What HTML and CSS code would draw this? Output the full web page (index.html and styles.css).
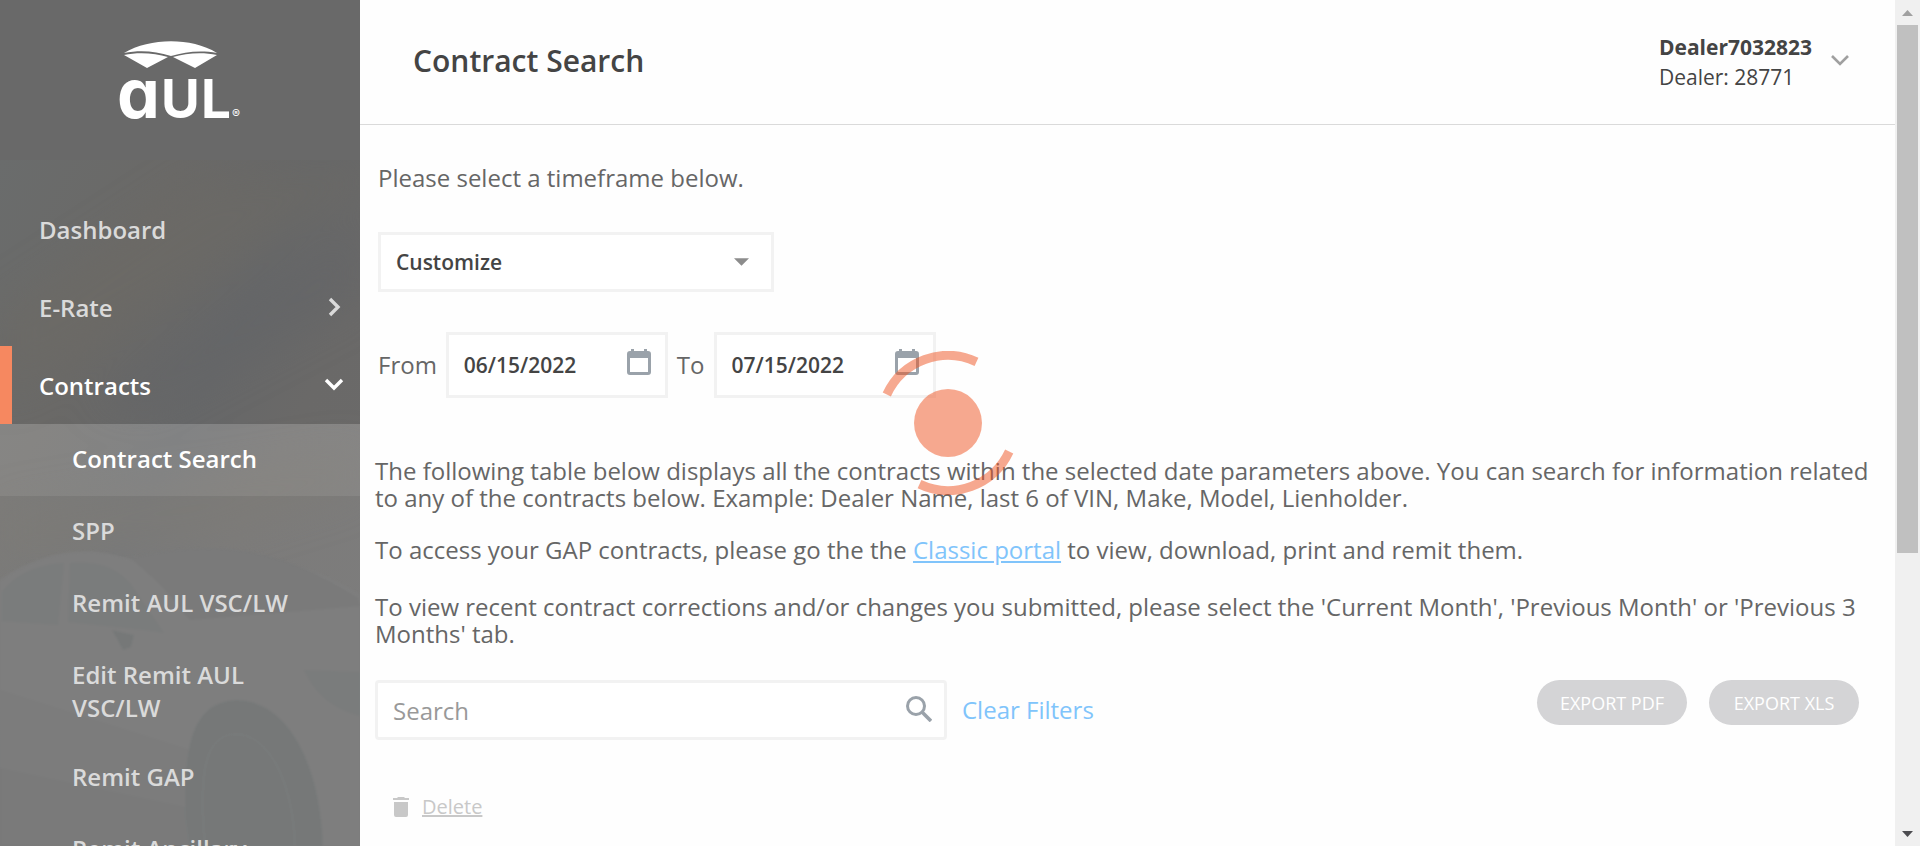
FILE: index.html
```html
<!DOCTYPE html>
<html lang="en">
<head>
<meta charset="utf-8">
<title>Contract Search</title>
<link rel="stylesheet" href="styles.css">
</head>
<body>
<div class="app">
  <aside class="sidebar">
    <svg class="sidebar-photo" viewBox="0 0 360 686" preserveAspectRatio="none" aria-hidden="true">
      <defs>
        <linearGradient id="sky" x1="0" y1="0" x2="1" y2="1">
          <stop offset="0" stop-color="#6a6c6c"/>
          <stop offset="0.25" stop-color="#6a6967"/>
          <stop offset="0.45" stop-color="#666768"/>
          <stop offset="0.6" stop-color="#6a6968"/>
          <stop offset="1" stop-color="#6b6b6b"/>
        </linearGradient>
        <filter id="soft" x="-20%" y="-20%" width="140%" height="140%"><feGaussianBlur stdDeviation="20"/></filter>
        <filter id="edge" x="-5%" y="-5%" width="110%" height="110%"><feGaussianBlur stdDeviation="1"/></filter>
      </defs>
      <rect width="360" height="686" fill="url(#sky)"/>
      <g filter="url(#soft)" opacity="0.5">
        <path d="M0 150 200 20 360 0v30L120 170 0 240z" fill="#6d6a65"/>
        <path d="M360 60v80L150 250l-60-10z" fill="#636567"/>
        <path d="M0 350 360 290v40L200 380 0 400z" fill="#6c6964"/>
      </g>
      <g filter="url(#edge)">
        <path d="M0 420c30-20 60-30 95-28 30 2 60 20 80 8 60-10 120-5 185 35v251H0z" fill="#6d6d6d"/>
        <path d="M2 432c15-20 40-28 62-29l-6 62-56-4zM70 403c30-2 45 4 60 20l34 50-20-3-76-8z" fill="#686a6a"/>
        <path d="M130 398c90-20 150-10 228 40l2 8-170 14c-10-10-20-30-60-62z" fill="#676868"/>
        <path d="M112 470l22 5-3 12-8 3z" fill="#646666"/>
        <path d="M0 530 190 590v96H0z" fill="#6a6b6b"/>
        <path d="M0 608 190 648v38H0z" fill="#676868"/>
        <path d="M186 658c-4-80 10-116 50-118 50 0 84 60 87 146H190z" fill="#646666"/>
        <path d="M205 686c-8-90 6-110 30-112 35 0 58 50 60 112" fill="none" stroke="#6b6c6c"/>
        <path d="M304 510l56 2v44c-30-8-46-24-56-46z" fill="#686a6a"/>
      </g>
    </svg>

    <div class="brand">
      <svg class="logo" viewBox="0 0 120 80" role="img" aria-label="aUL">
        <path d="M4 12C30-3 70-4 97 12 80 9 65 11 51 15 35 10 20 9 4 12z" fill="#fff"/>
        <path d="M4 14c14-3 31-2 44 2L27 27zM97 14c-14-3-31-2-44 2l22 11z" fill="#fff"/>
        <text class="logo-text" x="-3" y="77"><tspan class="logo-small">a</tspan><tspan class="logo-cap" x="41">U</tspan><tspan class="logo-cap" x="81">L</tspan><tspan class="logo-mark" x="112">®</tspan></text>
      </svg>
    </div>

    <nav class="nav">
      <a class="nav-item" href="#">Dashboard</a>
      <a class="nav-item" href="#">E-Rate
        <svg class="nav-arrow" viewBox="0 0 20 20" aria-hidden="true"><path d="M6 2l8 8-8 8" fill="none" stroke="currentColor" stroke-width="3.4"/></svg>
      </a>
      <a class="nav-item nav-item-open" href="#">Contracts
        <svg class="nav-arrow" viewBox="0 0 20 20" aria-hidden="true"><path d="M2 5l8 8 8-8" fill="none" stroke="currentColor" stroke-width="3.4"/></svg>
      </a>
      <div class="subnav">
        <a class="subnav-item subnav-item-active" href="#">Contract Search</a>
        <a class="subnav-item" href="#">SPP</a>
        <a class="subnav-item" href="#">Remit AUL VSC/LW</a>
        <a class="subnav-item" href="#">Edit Remit AUL VSC/LW</a>
        <a class="subnav-item" href="#">Remit GAP</a>
        <a class="subnav-item" href="#">Remit Ancillary</a>
      </div>
    </nav>
  </aside>

  <main class="main">
    <header class="header">
      <h1 class="title">Contract Search</h1>
      <button class="account" type="button">
        <span class="account-text"><strong class="account-name">Dealer7032823</strong><span>Dealer: 28771</span></span>
        <svg class="account-arrow" viewBox="0 0 20 20" aria-hidden="true"><path d="M2 4l8 8 8-8" fill="none" stroke="#a0a0a0" stroke-width="2.6"/></svg>
      </button>
    </header>

    <div class="content">
      <section class="timeframe">
        <label class="lead" for="range">Please select a timeframe below.</label>
        <div class="select-wrap">
          <select class="select" id="range"><option>Customize</option></select>
          <svg class="select-arrow" viewBox="0 0 14 7" aria-hidden="true"><path d="M0 0h14L7 7z" fill="#8c8c8c"/></svg>
        </div>
        <div class="dates">
          <label class="date-label" for="from">From</label>
          <div class="date">
            <input class="date-input" id="from" type="text" value="06/15/2022">
            <button class="date-button" type="button" aria-label="Choose start date">
              <svg viewBox="0 0 24 26" width="24" height="26" aria-hidden="true"><path d="M3 2h1V0h3v2h10V0h3v2h1a3 3 0 0 1 3 3v18a3 3 0 0 1-3 3H3a3 3 0 0 1-3-3V5a3 3 0 0 1 3-3zm0 7v14h18V9z" fill="#9aa2aa" fill-rule="evenodd"/></svg>
            </button>
          </div>
          <label class="date-label" for="to">To</label>
          <div class="date">
            <input class="date-input" id="to" type="text" value="07/15/2022">
            <button class="date-button" type="button" aria-label="Choose end date">
              <svg viewBox="0 0 24 26" width="24" height="26" aria-hidden="true"><path d="M3 2h1V0h3v2h10V0h3v2h1a3 3 0 0 1 3 3v18a3 3 0 0 1-3 3H3a3 3 0 0 1-3-3V5a3 3 0 0 1 3-3zm0 7v14h18V9z" fill="#9aa2aa" fill-rule="evenodd"/></svg>
            </button>
          </div>
        </div>
      </section>

      <section class="notes">
        <p class="note">The following table below displays all the contracts within the selected date parameters above. You can search for information related to any of the contracts below. Example: Dealer Name, last 6 of VIN, Make, Model, Lienholder.</p>
        <p class="note note-portal">To access your GAP contracts, please go the the <a class="link" href="#">Classic portal</a> to view, download, print and remit them.</p>
        <p class="note">To view recent contract corrections and/or changes you submitted, please select the 'Current Month', 'Previous Month' or 'Previous 3 Months' tab.</p>
      </section>

      <section class="toolbar">
        <div class="search">
          <input class="search-input" type="text" placeholder="Search" aria-label="Search">
          <button class="search-button" type="button" aria-label="Run search">
            <svg viewBox="0 0 26 26" width="26" height="26" aria-hidden="true"><circle cx="10" cy="10" r="8.5" fill="none" stroke="#9aa2aa" stroke-width="3"/><path d="M16 16l9 9" stroke="#9aa2aa" stroke-width="3.6"/></svg>
          </button>
        </div>
        <button class="clear" type="button">Clear Filters</button>
        <div class="exports">
          <button class="export" type="button">EXPORT PDF</button>
          <button class="export" type="button">EXPORT XLS</button>
        </div>
      </section>

      <button class="delete" type="button">
        <svg viewBox="0 0 16 20" width="16" height="20" aria-hidden="true"><path d="M0 1h4l1-1h6l1 1h4v2H0zM1 5h14v13a2 2 0 0 1-2 2H3a2 2 0 0 1-2-2z" fill="#c8c8c8"/></svg>
        <span class="delete-text">Delete</span>
      </button>
    </div>
  </main>

  <div class="scrollbar" aria-hidden="true">
    <svg class="scroll-end" viewBox="0 0 25 25"><path d="M7 16l5.500-6L18 16z" fill="#a0a0a0"/></svg>
    <div class="scroll-track"><div class="scroll-thumb"></div></div>
    <svg class="scroll-end" viewBox="0 0 25 25"><path d="M7 10h11l-5.500 6z" fill="#4c4c50"/></svg>
  </div>

  <div class="loader" role="status" aria-label="Loading">
    <svg viewBox="-72 -72 144 144" width="144" height="144" aria-hidden="true">
      <g opacity="0.5"><circle r="34" fill="#ef5523"/>
      <path d="M-61.200-28.500A67.500 67.500 0 0 1 28.500-61.200M61.200 28.500A67.500 67.500 0 0 1-28.500 61.200" fill="none" stroke="#ef5523" stroke-width="9"/></g>
    </svg>
  </div>
</div>
</body>
</html>
```
FILE: styles.css
```css
* { box-sizing: border-box; }

body {
  margin: 0;
  font-family: "Open Sans", "Noto Sans", sans-serif;
  font-weight: 400;
  font-size: 24px;
  color: #666;
  background: #fefefe;
}

button, input, select { font: inherit; color: inherit; }
button { padding: 0; border: 0; background: none; cursor: pointer; }

.app {
  position: relative;
  display: flex;
  height: 100vh;
  overflow: hidden;
}

/* Sidebar */
.sidebar {
  position: relative;
  flex: 0 0 360px;
  overflow: hidden;
  background: #696969;
}
.sidebar-photo {
  position: absolute;
  top: 160px;
  left: 0;
  width: 100%;
  height: calc(100% - 160px);
}
.brand {
  display: flex;
  justify-content: center;
  height: 160px;
  padding-top: 41px;
}
.logo { width: 120px; height: 80px; overflow: visible; }
.logo-text { fill: #fff; font-family: Inter, sans-serif; font-weight: 700; }
.logo-small { font-size: 68px; font-feature-settings: "cv11"; }
.logo-cap { font-size: 53px; }
.logo-mark { font-size: 12px; font-weight: 400; }

.nav { position: relative; padding-top: 30px; }
.nav-item {
  display: flex;
  align-items: center;
  justify-content: space-between;
  height: 78px;
  padding: 0 16px 0 39px;
  font-weight: 600;
  color: #dadada;
  text-decoration: none;
}
.nav-item-open {
  padding-left: 27px;
  border-left: 12px solid #f68860;
  color: #fff;
}
.nav-arrow { width: 20px; height: 20px; }
.subnav { background: rgba(255, 255, 255, 0.12); }
.subnav-item {
  display: block;
  min-height: 72px;
  padding: 18px 72px;
  line-height: 33px;
  font-weight: 600;
  color: #dadada;
  text-decoration: none;
}
.subnav-item-active { background: rgba(255, 255, 255, 0.08); color: #fff; }

/* Header */
.main { flex: 1; min-width: 0; }
.header {
  display: flex;
  align-items: center;
  justify-content: space-between;
  height: 125px;
  padding: 0 45px 0 53px;
  border-bottom: 1px solid #dadada;
}
.title { margin: 0; padding-bottom: 3px; font-size: 30px; font-weight: 600; color: #444; }
.account {
  display: flex;
  align-items: center;
  gap: 18px;
  font-size: 21px;
  line-height: 30px;
  color: #444;
  text-align: left;
}
.account-text { display: flex; flex-direction: column; }
.account-name { font-weight: 700; }
.account-arrow { width: 20px; height: 20px; }

/* Content */
.content { padding: 36px 15px 0; }
.timeframe { padding-left: 3px; }
.lead { display: block; line-height: 33px; }
.select-wrap { position: relative; width: 396px; margin-top: 38px; }
.select {
  display: block;
  width: 100%;
  height: 60px;
  padding: 0 15px;
  border: 3px solid #f2f2f2;
  border-radius: 0;
  appearance: none;
  background: #fff;
  font-size: 21px;
  font-weight: 600;
  color: #444;
}
.select-arrow { position: absolute; top: 26px; right: 25px; width: 15px; height: 8px; pointer-events: none; }
.dates { display: flex; align-items: center; gap: 9px; margin-top: 40px; }
.date-label { padding-bottom: 2px; }
.date { position: relative; width: 222px; }
.date-input {
  display: block;
  width: 100%;
  height: 66px;
  padding: 0 54px 0 15px;
  border: 3px solid #f2f2f2;
  background: #fff;
  font-size: 21px;
  font-weight: 600;
  color: #444;
}
.date-button { position: absolute; top: 17px; right: 17px; line-height: 0; }

.notes { margin-top: 59px; line-height: 27px; }
.note { margin: 0 0 25px; }
.note-portal { margin-bottom: 30px; }
.link { color: #80c4fb; }

.toolbar { display: flex; align-items: flex-start; margin-top: 33px; padding-right: 21px; }
.search { position: relative; width: 572px; }
.search-input {
  display: block;
  width: 100%;
  height: 60px;
  padding: 0 60px 0 15px;
  border: 3px solid #f2f2f2;
  border-radius: 4px;
  background: #fff;
  color: #888;
}
.search-input::placeholder { color: #999; }
.search-button { position: absolute; top: 16px; right: 15px; line-height: 0; }
.clear { margin-left: 15px; line-height: 60px; color: #80c4fb; }
.exports { display: flex; gap: 22px; margin-left: auto; }
.export {
  width: 150px;
  height: 45px;
  border-radius: 23px;
  background: #d4d4d6;
  font-size: 18px;
  font-weight: 400;
  color: #fff;
}
.delete {
  display: flex;
  align-items: center;
  gap: 13px;
  margin: 52px 0 0 18px;
  font-size: 20px;
  line-height: 30px;
  color: #c8c8c8;
}
.delete-text { text-decoration: underline; }

/* Page scroll bar */
.scrollbar {
  display: flex;
  flex-direction: column;
  flex: 0 0 25px;
  background: #f0f0f0;
}
.scroll-end { width: 25px; height: 25px; }
.scroll-track { flex: 1; padding: 0 2px; }
.scroll-thumb { height: 66.300%; background: #c0c0c0; }

/* Loading indicator over the page */
.loader {
  position: absolute;
  inset: 0 24px 0 0;
  display: flex;
  align-items: center;
  justify-content: center;
  pointer-events: none;
}
```
